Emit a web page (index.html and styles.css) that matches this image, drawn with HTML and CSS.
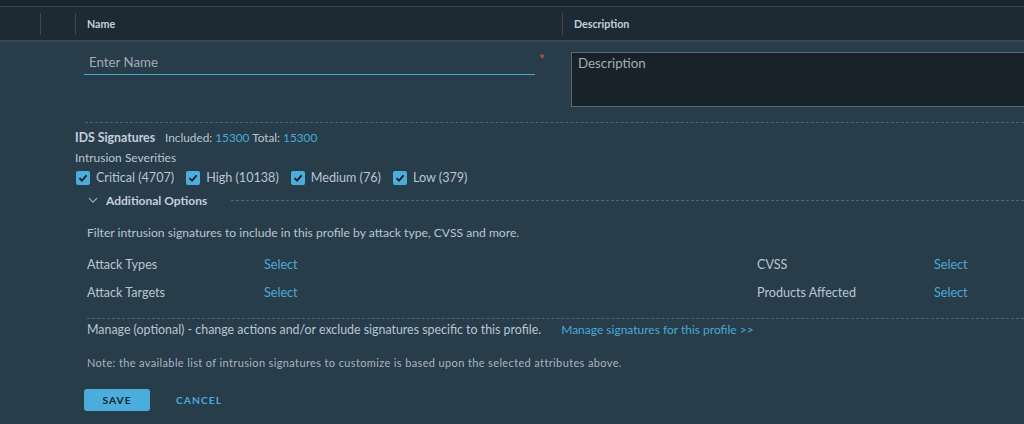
FILE: index.html
```html
<!DOCTYPE html>
<html>
<head>
<meta charset="utf-8">
<link rel="stylesheet" href="styles.css">
</head>
<body>
<div class="topstrip"></div>
<div class="thead">
  <div class="th th-empty"></div>
  <div class="th th-empty sep"></div>
  <div class="th sep">Name</div>
  <div class="th sep">Description</div>
</div>
<div class="content">
  <div class="form-row">
    <div class="name-field">
      <div class="name-input">Enter Name</div>
    </div>
    <span class="req">*</span>
    <div class="desc-box">Description</div>
  </div>

  <div class="dashed dashed-top"></div>

  <div class="section">
    <div class="sig-line"><span class="bold">IDS Signatures</span><span class="inc">Included: <span class="link">15300</span> Total: <span class="link">15300</span></span></div>
    <div class="sev-title">Intrusion Severities</div>
    <div class="checks">
      <label class="check"><span class="box"><svg width="10" height="10" viewBox="0 0 10 10"><path d="M1.5 5.2 L4 7.6 L8.6 2.4" fill="none" stroke="#0f1a20" stroke-width="1.8"/></svg></span>Critical (4707)</label>
      <label class="check"><span class="box"><svg width="10" height="10" viewBox="0 0 10 10"><path d="M1.5 5.2 L4 7.6 L8.6 2.4" fill="none" stroke="#0f1a20" stroke-width="1.8"/></svg></span>High (10138)</label>
      <label class="check"><span class="box"><svg width="10" height="10" viewBox="0 0 10 10"><path d="M1.5 5.2 L4 7.6 L8.6 2.4" fill="none" stroke="#0f1a20" stroke-width="1.8"/></svg></span>Medium (76)</label>
      <label class="check"><span class="box"><svg width="10" height="10" viewBox="0 0 10 10"><path d="M1.5 5.2 L4 7.6 L8.6 2.4" fill="none" stroke="#0f1a20" stroke-width="1.8"/></svg></span>Low (379)</label>
    </div>
  </div>

  <div class="addl">
    <svg class="chev" width="10" height="7" viewBox="0 0 10 7"><path d="M1 1.2 L5 5.2 L9 1.2" fill="none" stroke="#9fb0bd" stroke-width="1.2"/></svg>
    <span class="bold">Additional Options</span>
    <div class="dashed grow"></div>
  </div>

  <div class="inner">
    <div class="filter-text">Filter intrusion signatures to include in this profile by attack type, CVSS and more.</div>
    <div class="attr-grid">
      <span>Attack Types</span><span class="link">Select</span><span class="gap-cell"></span><span>CVSS</span><span class="link">Select</span>
      <span>Attack Targets</span><span class="link">Select</span><span class="gap-cell"></span><span>Products Affected</span><span class="link">Select</span>
    </div>
    <div class="dashed dashed-mid"></div>
    <div class="manage"><span>Manage (optional) - change actions and/or exclude signatures specific to this profile.</span><span class="link mlink">Manage signatures for this profile &gt;&gt;</span></div>
    <div class="note">Note: the available list of intrusion signatures to customize is based upon the selected attributes above.</div>
    <div class="buttons">
      <button class="btn-save">SAVE</button>
      <button class="btn-cancel">CANCEL</button>
    </div>
  </div>
</div>
</body>
</html>
```

FILE: styles.css
```css
html, body {
  margin: 0;
  padding: 0;
}
body {
  width: 1024px;
  height: 424px;
  overflow: hidden;
  background: #283d4a;
  font-family: "Lato", "Liberation Sans", sans-serif;
  color: #b9c6d0;
  font-size: 12px;
}
.topstrip {
  height: 6px;
  background: #1a242c;
  border-bottom: 1px solid #35434e;
}
.thead {
  display: grid;
  grid-template-columns: 40px 35px 487px 1fr;
  height: 33px;
  background: #1e2a33;
  border-bottom: 2px solid #3b4853;
  align-items: center;
}
.th {
  height: 22px;
  display: flex;
  align-items: center;
  font-size: 10.7px;
  font-weight: 700;
  color: #c3d0dc;
  padding-left: 11px;
}
.th-empty {
  padding-left: 0;
}
.sep {
  border-left: 1px solid #3c4852;
}
.content {
  padding-left: 75px;
}
.form-row {
  display: flex;
  align-items: flex-start;
  padding-top: 10px;
  padding-left: 9px;
}
.name-field {
  flex: 0 0 451px;
  padding-top: 3px;
}
.name-input {
  font-size: 13.3px;
  color: #a3acb3;
  padding: 0 0 4px 5px;
  border-bottom: 1px solid #4aa9d3;
  line-height: 15px;
}
.req {
  flex: 0 0 32px;
  color: #e04a4a;
  font-size: 14px;
  padding-left: 4px;
  line-height: 13px;
}
.desc-box {
  flex: 0 0 470px;
  height: 55px;
  background: #182229;
  border: 1px solid #5c6772;
  color: #a5aeb5;
  font-size: 13.3px;
  padding: 2px 6px;
  box-sizing: border-box;
}
.dashed {
  border-top: 1px dashed #55636e;
}
.dashed-top {
  margin: 15px 0 0 10px;
}
.section {
  padding-top: 7px;
}
.bold {
  font-weight: 700;
  color: #c3d0dc;
}
.sig-line {
  line-height: 16px;
  font-size: 12.3px;
}
.inc {
  margin-left: 10px;
  font-size: 11.8px;
}
.link {
  color: #4aaad6;
}
.sev-title {
  margin-top: 4px;
  line-height: 16px;
  font-size: 12px;
}
.checks {
  display: flex;
  gap: 11px;
  margin-top: 4px;
  line-height: 16px;
}
.check {
  display: flex;
  align-items: center;
  gap: 6px;
  font-size: 12.6px;
}
.box {
  width: 14px;
  height: 14px;
  border-radius: 2px;
  background: #49aedb;
  display: flex;
  align-items: center;
  justify-content: center;
  margin-left: 1px;
}
.addl {
  display: flex;
  align-items: center;
  margin-top: 6px;
  padding-left: 13px;
  height: 16px;
  font-size: 12px;
}
.chev {
  margin-right: 8px;
}
.grow {
  flex: 1;
  margin-left: 24px;
}
.inner {
  padding-left: 12px;
}
.filter-text {
  margin-top: 17px;
  line-height: 16px;
  font-size: 12.15px;
}
.attr-grid {
  display: grid;
  grid-template-columns: 177px 100px 393px 177px 60px;
  row-gap: 12px;
  margin-top: 16px;
  line-height: 16px;
  font-size: 12.6px;
}
.dashed-mid {
  margin-top: 17px;
}
.manage {
  display: flex;
  gap: 20px;
  margin-top: 3px;
  line-height: 16px;
  font-size: 12.4px;
}
.mlink {
  font-size: 12px;
}
.note {
  margin-top: 18px;
  font-size: 11px;
  letter-spacing: 0.37px;
  line-height: 14px;
  color: #aab6bf;
}
.buttons {
  display: flex;
  align-items: center;
  gap: 12px;
  margin-top: 19px;
  margin-left: -3px;
}
.btn-save {
  width: 66px;
  height: 22px;
  background: #49aedb;
  border: none;
  border-radius: 3px;
  color: #15232c;
  font-family: inherit;
  font-size: 10.3px;
  font-weight: 700;
  letter-spacing: 1px;
}
.btn-cancel {
  background: none;
  border: none;
  color: #49aad5;
  font-family: inherit;
  font-size: 10.3px;
  font-weight: 700;
  letter-spacing: 1px;
  padding: 0 14px;
}
```
